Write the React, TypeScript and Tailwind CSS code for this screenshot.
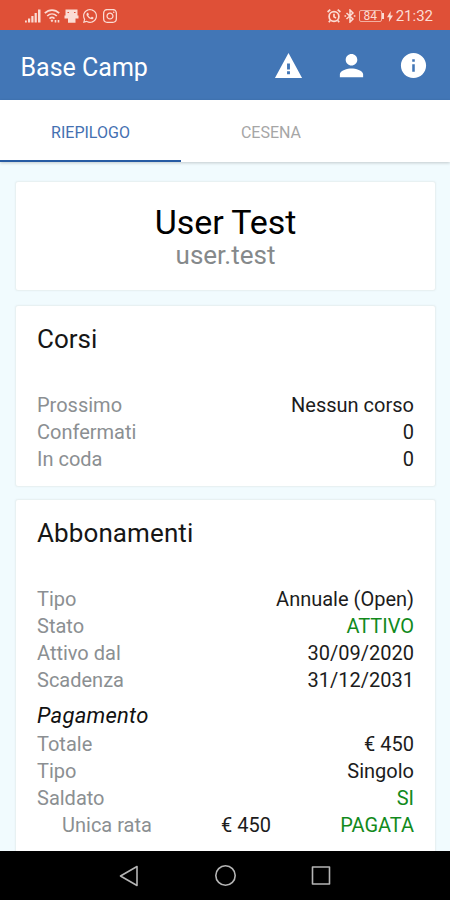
import React from 'react';
import { IoMdWarning, IoMdPerson, IoMdInformationCircle } from 'react-icons/io';
import { FaWhatsapp, FaInstagram } from 'react-icons/fa';

type RowProps = {
  label: string;
  value: string;
  green?: boolean;
};

const Row: React.FC<RowProps> = ({ label, value, green }) => (
  <div className="flex h-[27px] items-center justify-between">
    <span className="text-[#8b8f92]">{label}</span>
    <span className={green ? 'text-[#128a1c]' : 'text-[#1c1c1c]'}>{value}</span>
  </div>
);

const Card: React.FC<{ className?: string; children: React.ReactNode }> = ({ className = '', children }) => (
  <section className={`rounded-[3px] border border-[#e8f1f2] bg-white px-[21px] shadow-[0_0_2px_rgba(0,60,70,0.05)] ${className}`}>
    {children}
  </section>
);

const StatusBar = () => (
  <div className="flex h-[30px] shrink-0 items-center justify-between bg-[#df5037] pt-[2px] pr-[17px] pl-[25px] text-[#fbdcd4]">
    <div className="flex items-center gap-[3px]">
      {/* Signal */}
      <svg width="16" height="14" viewBox="0 0 16 14" fill="currentColor">
        <rect x="0" y="11.5" width="1.8" height="2" />
        <rect x="3" y="9.5" width="2.2" height="4" />
        <rect x="6.3" y="7" width="2.2" height="6.5" />
        <rect x="9.6" y="4" width="2.2" height="9.5" />
        <rect x="13" y="0.5" width="2.5" height="13" />
      </svg>
      {/* Wifi */}
      <svg width="16" height="14" viewBox="0 0 16 14" fill="none" stroke="currentColor" strokeWidth="1.7">
        <path d="M0.8 4.2C5 0 11 0 15.2 4.2" />
        <path d="M3.2 7C6 4.3 10 4.3 12.8 7" />
        <path d="M5.5 9.6C7 8.2 9 8.2 10.5 9.6" />
        <path d="M8 10.2L6.5 11.7L8 13.2L9.3 11.7Z" fill="currentColor" stroke="none" />
        <path d="M11.5 11v2.5M14.5 11v2.5" strokeWidth="1.6" />
      </svg>
      {/* Device cleaner */}
      <svg className="ml-[1px]" width="15" height="14" viewBox="0 0 15 14" fill="currentColor">
        <path d="M1.5 0.5h12v6h1v3h-3v4.200H4v-4.200H0.500V6.500h1z" />
        <path d="M3.500 3.500h1.500M10 3.500h1.500" fill="none" stroke="#df5037" strokeWidth="1" />
      </svg>
      <FaWhatsapp size={16} />
      <FaInstagram size={16} className="ml-px" />
    </div>
    <div className="flex items-center">
      {/* Alarm */}
      <svg width="14" height="14" viewBox="0 0 14 14" fill="none" stroke="currentColor" strokeWidth="1.7">
        <circle cx="7" cy="7.5" r="4.9" />
        <path d="M7 4.8v3l2 1.2M0.6 3L3.3 0.7M13.4 3L10.7 0.7M3.2 11.5L1.8 13.3M10.8 11.5L12.2 13.3" />
      </svg>
      {/* Bluetooth */}
      <svg className="ml-[3px]" width="12" height="14" viewBox="0 0 12 14" fill="none" stroke="currentColor" strokeWidth="1.5">
        <path d="M2.5 4L9 10L6 13V1L9 4L2.5 10" />
        <path d="M0.5 7h1.6M9.8 7h1.6" strokeWidth="1.7" />
      </svg>
      <div className="ml-[3px] flex h-[12px] w-[23px] items-center justify-center rounded-[2px] border border-[#f3b0a2] text-[12px] leading-none">
        84
      </div>
      <div className="h-[6px] w-[2px] bg-current" />
      <svg className="ml-[3px]" width="6" height="11" viewBox="0 0 6 11" fill="currentColor">
        <path d="M3.8 0L0 6.2h2.3L1.900 11L6 4.500H3.500z" />
      </svg>
      <span className="ml-[3px] text-[15px] leading-none">21:32</span>
    </div>
  </div>
);

export default function App() {
  return (
    <div className="flex h-[900px] w-[450px] flex-col overflow-hidden bg-[#f1fbfe] font-['Roboto',sans-serif]">
      <StatusBar />

      <header className="flex h-[70px] shrink-0 items-center justify-between bg-[#4276b6] pr-[21px] pl-[20.5px] text-white">
        <h1 className="mt-[4px] text-[25px] leading-none">Base Camp</h1>
        <div className="flex items-center gap-[31.5px]">
          <IoMdWarning size={31} />
          <IoMdPerson size={31} />
          <IoMdInformationCircle size={31} />
        </div>
      </header>

      <nav className="z-10 flex h-[62px] shrink-0 bg-white text-[16px] shadow-[0_1px_3px_rgba(0,0,0,0.2)]">
        <button className="w-[181px] border-b-2 border-[#275ba3] pt-[5px] text-[#4470b1]">RIEPILOGO</button>
        <button className="w-[180px] pt-[3px] text-[#a6a6a6]">CESENA</button>
      </nav>

      <main className="flex min-h-0 flex-1 flex-col overflow-hidden pt-[19px] pr-[14px] pl-[15px] text-[20px]">
        <Card className="h-[110px] shrink-0 pt-[20px] text-center">
          <h2 className="text-[34px] leading-[40px] tracking-[-0.1px] text-black">User Test</h2>
          <p className="text-[26px] leading-[26px] text-[#85898b]">user.test</p>
        </Card>

        <Card className="mt-[14px] h-[182px] shrink-0 pt-[17px]">
          <h3 className="mb-[36px] text-[26px] leading-[32px] text-[#161616]">Corsi</h3>
          <Row label="Prossimo" value="Nessun corso" />
          <Row label="Confermati" value="0" />
          <Row label="In coda" value="0" />
        </Card>

        <Card className="mt-[12px] h-[380px] shrink-0 pt-[17px]">
          <h3 className="mb-[36px] text-[26px] leading-[32px] tracking-[0.1px] text-[#161616]">Abbonamenti</h3>
          <Row label="Tipo" value="Annuale (Open)" />
          <Row label="Stato" value="ATTIVO" green />
          <Row label="Attivo dal" value="30/09/2020" />
          <Row label="Scadenza" value="31/12/2031" />
          <h4 className="mt-[8px] text-[22px] leading-[29px] tracking-[0.25px] text-[#111] italic">Pagamento</h4>
          <Row label="Totale" value="€ 450" />
          <Row label="Tipo" value="Singolo" />
          <Row label="Saldato" value="SI" green />
          <div className="flex h-[27px] items-center justify-between pl-[25px]">
            <div className="flex w-[209px] justify-between">
              <span className="text-[#8b8f92]">Unica rata</span>
              <span className="text-[#1c1c1c]">€ 450</span>
            </div>
            <span className="text-[#128a1c]">PAGATA</span>
          </div>
        </Card>
      </main>

      {/* Android navigation */}
      <div className="flex h-[49px] shrink-0 items-center justify-center gap-[72px] bg-black text-[#b5b5b5]">
        <svg width="24" height="24" viewBox="0 0 24 24" fill="none" stroke="currentColor" strokeWidth="1.6" strokeLinejoin="round">
          <path d="M20 2.5V21.5L3.5 12z" />
        </svg>
        <svg width="24" height="24" viewBox="0 0 24 24" fill="none" stroke="currentColor" strokeWidth="1.6">
          <circle cx="12.5" cy="11.5" r="9.7" />
        </svg>
        <svg width="24" height="24" viewBox="0 0 24 24" fill="none" stroke="currentColor" strokeWidth="1.6" strokeLinejoin="round">
          <rect x="3.5" y="3" width="17" height="17" />
        </svg>
      </div>
    </div>
  );
}
